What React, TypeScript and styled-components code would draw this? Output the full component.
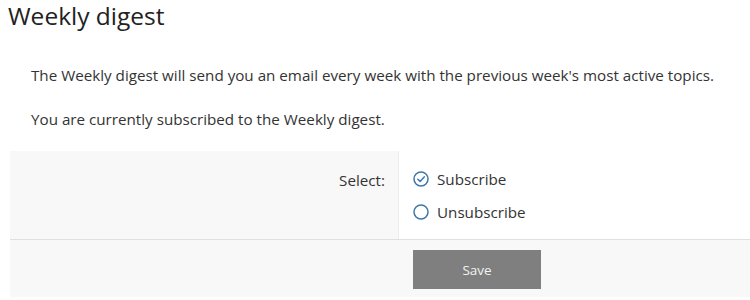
import React from "react";
import styled, { createGlobalStyle } from "styled-components";

const Global = createGlobalStyle`
  html, body { margin: 0; padding: 0; background: #fff; }
  body { font-family: "Open Sans", "Noto Sans", sans-serif; color: #333; }
  * { box-sizing: border-box; }
`;

const Page = styled.div`
  width: 750px;
  padding-top: 1px;
`;

const Title = styled.h1`
  margin: 0;
  padding: 0 0 0 8px;
  font-size: 24.5px;
  line-height: 30px;
  font-weight: 400;
  color: #222;
`;

const Intro = styled.div`
  padding: 33px 0 0 31px;
  display: flex;
  flex-direction: column;
  gap: 21px;
`;

const Para = styled.p`
  margin: 0;
  font-size: 15.2px;
  line-height: 23px;
  color: #333;
`;

const Form = styled.div`
  margin: 20px 0 0 10px;
`;

const Row = styled.div`
  display: grid;
  grid-template-columns: 389px 1fr;
  border-bottom: 1px solid #e0e0e0;
`;

const Label = styled.div`
  background: #f8f8f8;
  border-right: 1px solid #ededed;
  text-align: right;
  padding: 18px 13px 0 0;
  font-size: 15.2px;
  line-height: 22px;
  color: #333;
`;

const Options = styled.div`
  display: flex;
  flex-direction: column;
  gap: 11px;
  padding: 17px 0 16px 14px;
`;

const Option = styled.label`
  display: flex;
  align-items: center;
  gap: 8px;
  font-size: 15.2px;
  line-height: 22px;
  color: #333;
`;

const Footer = styled.div`
  display: grid;
  grid-template-columns: 403px 1fr;
  background: #f8f8f8;
  padding: 10px 0 8px;
`;

const SaveButton = styled.button`
  grid-column: 2;
  width: 128px;
  height: 39px;
  border: none;
  background: #7f7f7f;
  color: #f2f2f2;
  font-family: inherit;
  font-size: 13.5px;
`;

const Radio = ({ checked }: { checked: boolean }) => (
  <svg width="16" height="16" viewBox="0 0 16 16">
    <circle cx="8" cy="8" r="7" fill="none" stroke="#3e78a8" strokeWidth="1.5" />
    {checked && (
      <path d="M4.8 8.2 L7.1 10.4 L11.2 5.9" fill="none" stroke="#3e78a8" strokeWidth="1.5" strokeLinecap="round" strokeLinejoin="round" />
    )}
  </svg>
);

export default function App() {
  return (
    <Page>
      <Global />
      <Title>Weekly digest</Title>
      <Intro>
        <Para>The Weekly digest will send you an email every week with the previous week's most active topics.</Para>
        <Para>You are currently subscribed to the Weekly digest.</Para>
      </Intro>
      <Form>
        <Row>
          <Label>Select:</Label>
          <Options>
            <Option><Radio checked />Subscribe</Option>
            <Option><Radio checked={false} />Unsubscribe</Option>
          </Options>
        </Row>
        <Footer>
          <SaveButton>Save</SaveButton>
        </Footer>
      </Form>
    </Page>
  );
}
